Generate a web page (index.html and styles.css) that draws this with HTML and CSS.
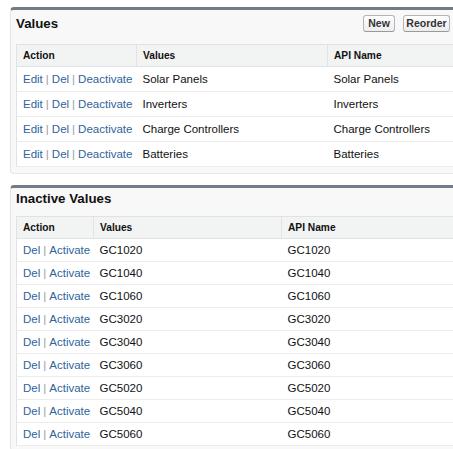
FILE: index.html
```html
<!DOCTYPE html>
<html>
<head>
<meta charset="utf-8">
<link rel="stylesheet" href="styles.css">
</head>
<body>
<div class="page">
  <section class="panel panel-active">
    <div class="panel-head head-active">
      <h2 class="panel-title">Values</h2>
      <div class="buttons">
        <button class="btn btn-new">New</button>
        <button class="btn btn-reorder">Reorder</button>
      </div>
    </div>
    <table class="list list-active">
      <thead>
        <tr><th class="c1">Action</th><th class="c2">Values</th><th class="c3">API Name</th></tr>
      </thead>
      <tbody>
        <tr><td class="actions"><a>Edit</a><span class="sep">|</span><a>Del</a><span class="sep">|</span><a>Deactivate</a></td><td>Solar Panels</td><td>Solar Panels</td></tr>
        <tr><td class="actions"><a>Edit</a><span class="sep">|</span><a>Del</a><span class="sep">|</span><a>Deactivate</a></td><td>Inverters</td><td>Inverters</td></tr>
        <tr><td class="actions"><a>Edit</a><span class="sep">|</span><a>Del</a><span class="sep">|</span><a>Deactivate</a></td><td>Charge Controllers</td><td>Charge Controllers</td></tr>
        <tr><td class="actions"><a>Edit</a><span class="sep">|</span><a>Del</a><span class="sep">|</span><a>Deactivate</a></td><td>Batteries</td><td>Batteries</td></tr>
      </tbody>
    </table>
  </section>

  <section class="panel panel-inactive">
    <div class="panel-head head-inactive">
      <h2 class="panel-title">Inactive Values</h2>
    </div>
    <table class="list list-inactive">
      <thead>
        <tr><th class="c1">Action</th><th class="c2">Values</th><th class="c3">API Name</th></tr>
      </thead>
      <tbody>
        <tr><td class="actions"><a>Del</a><span class="sep">|</span><a>Activate</a></td><td>GC1020</td><td>GC1020</td></tr>
        <tr><td class="actions"><a>Del</a><span class="sep">|</span><a>Activate</a></td><td>GC1040</td><td>GC1040</td></tr>
        <tr><td class="actions"><a>Del</a><span class="sep">|</span><a>Activate</a></td><td>GC1060</td><td>GC1060</td></tr>
        <tr><td class="actions"><a>Del</a><span class="sep">|</span><a>Activate</a></td><td>GC3020</td><td>GC3020</td></tr>
        <tr><td class="actions"><a>Del</a><span class="sep">|</span><a>Activate</a></td><td>GC3040</td><td>GC3040</td></tr>
        <tr><td class="actions"><a>Del</a><span class="sep">|</span><a>Activate</a></td><td>GC3060</td><td>GC3060</td></tr>
        <tr><td class="actions"><a>Del</a><span class="sep">|</span><a>Activate</a></td><td>GC5020</td><td>GC5020</td></tr>
        <tr><td class="actions"><a>Del</a><span class="sep">|</span><a>Activate</a></td><td>GC5040</td><td>GC5040</td></tr>
        <tr><td class="actions"><a>Del</a><span class="sep">|</span><a>Activate</a></td><td>GC5060</td><td>GC5060</td></tr>
      </tbody>
    </table>
  </section>
</div>
</body>
</html>
```

FILE: styles.css
```css
html, body {
  margin: 0;
  padding: 0;
  background: #ffffff;
  overflow: hidden;
}
body {
  font-family: "Liberation Sans", Arial, Helvetica, sans-serif;
  color: #1a1a1a;
}
.page {
  padding: 7px 0 0 10px;
}
.panel {
  background: #f8f8f8;
  border-top: 3px solid #737b88;
  border-left: 1px solid #e4e4e4;
  border-bottom: 1px solid #e6e6e6;
  border-radius: 4px 0 0 4px;
  padding: 0 0 6px 5px;
}
.panel-inactive {
  margin-top: 11px;
  padding-bottom: 4px;
}
.panel-head {
  display: flex;
  align-items: center;
  justify-content: space-between;
  padding-right: 3px;
}
.head-active {
  padding-top: 5px;
  height: 17px;
  margin-bottom: 12px;
}
.head-inactive {
  padding-top: 3px;
  height: 15px;
  margin-bottom: 10px;
}
.panel-title {
  margin: 0;
  font-size: 13.3px;
  font-weight: bold;
  color: #111;
  line-height: 15px;
}
.buttons {
  display: flex;
  gap: 8px;
}
.btn {
  font-family: "Liberation Sans", Arial, sans-serif;
  font-size: 10.5px;
  font-weight: bold;
  color: #333;
  height: 17px;
  padding: 0;
  border: 1px solid #b5b5b5;
  border-bottom-color: #9a9a9a;
  border-radius: 3px;
  background: linear-gradient(#ffffff, #ededed);
  line-height: 15px;
  text-align: center;
}
.btn-new {
  width: 32px;
}
.btn-reorder {
  width: 47px;
}
.list {
  border-collapse: collapse;
  background: #ffffff;
  border-left: 1px solid #e0e3e5;
  width: 100%;
  table-layout: fixed;
  font-size: 11.5px;
}
.list th {
  background: #f2f3f3;
  border-top: 1px solid #e0e3e5;
  border-bottom: 1px solid #e0e3e5;
  border-left: 1px solid #e3e3e3;
  font-size: 10.2px;
  font-weight: bold;
  text-align: left;
  color: #111;
  padding: 0 0 0 6px;
}
.list th.c1 {
  border-left: none;
}
.list td {
  border-bottom: 1px solid #ececec;
  padding: 0 0 0 6px;
  color: #111;
  white-space: nowrap;
  overflow: hidden;
}
.list-active .c1 { width: 113px; }
.list-active .c2 { width: 184px; }
.list-active th { height: 21px; }
.list-active td { height: 24px; }
.list-inactive .c1 { width: 70px; }
.list-inactive .c2 { width: 181px; }
.list-inactive th { height: 21px; }
.list-inactive td { height: 22px; }
.actions a {
  color: #2f649b;
  text-decoration: none;
}
.sep {
  color: #9a9a9a;
  margin: 0 3px;
}
```
